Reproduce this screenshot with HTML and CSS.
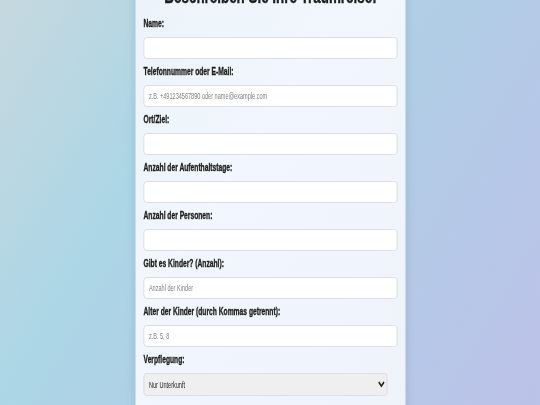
FILE: index.html
```html
<!DOCTYPE html>
<html lang="de">
<head>
<meta charset="utf-8">
<title>Traumreise</title>
<link rel="stylesheet" href="styles.css">
</head>
<body>
<main class="card">
  <h2 class="title">Beschreiben Sie Ihre Traumreise!</h2>
  <form class="form">
    <label class="label" for="name">Name:</label>
    <input class="field" id="name" type="text">
    <label class="label" for="kontakt">Telefonnummer oder E-Mail:</label>
    <input class="field" id="kontakt" type="text" placeholder="z.B. +491234567890 oder name@example.com">
    <label class="label" for="ort">Ort/Ziel:</label>
    <input class="field" id="ort" type="text">
    <label class="label" for="tage">Anzahl der Aufenthaltstage:</label>
    <input class="field" id="tage" type="text">
    <label class="label" for="personen">Anzahl der Personen:</label>
    <input class="field" id="personen" type="text">
    <label class="label" for="kinder">Gibt es Kinder? (Anzahl):</label>
    <input class="field" id="kinder" type="text" placeholder="Anzahl der Kinder">
    <label class="label" for="alter">Alter der Kinder (durch Kommas getrennt):</label>
    <input class="field" id="alter" type="text" placeholder="z.B. 5, 8">
    <label class="label" for="verpflegung">Verpflegung:</label>
    <select class="select" id="verpflegung">
      <option>Nur Unterkunft</option>
      <option>Frühstück</option>
      <option>Halbpension</option>
      <option>Vollpension</option>
    </select>
  </form>
</main>
</body>
</html>
```

FILE: styles.css
```css
html, body {
  margin: 0;
  padding: 0;
}
body {
  height: 405px;
  overflow: hidden;
  font-family: "Liberation Sans", Arial, sans-serif;
  background: linear-gradient(120deg, #c6d8df 0%, #acd6e6 30%, #b2cbe6 65%, #bcc2e8 100%);
  color: #222;
}
/* The reference is a horizontally compressed capture: the card is laid out
   at its natural width and squeezed to the width it shows. */
.card {
  box-sizing: border-box;
  width: 403px;
  margin: -36px auto 0;
  padding: 20px 12px 20px;
  background: linear-gradient(135deg, #ebf3f9 0%, #f1f7fc 40%, #eef3f9 100%);
  filter: drop-shadow(0 0 6px rgba(60, 90, 130, 0.2));
  min-height: 470px;
  transform: scaleX(0.67);
  transform-origin: 50% 0;
}
.title {
  margin: 0 0 10px;
  font-size: 20px;
  line-height: 24px;
  font-weight: bold;
  text-align: center;
  color: #1e1e1e;
  -webkit-text-stroke: 0.4px #1e1e1e;
}
.form {
  display: flex;
  flex-direction: column;
  align-items: flex-start;
}
.label {
  display: block;
  font-size: 10px;
  line-height: 12px;
  font-weight: bold;
  margin-bottom: 7px;
  color: #1e1e1e;
  -webkit-text-stroke: 0.35px #1e1e1e;
}
.field {
  box-sizing: border-box;
  width: 100%;
  height: 22px;
  margin: 0 0 7px;
  padding: 0 7px;
  border: 1px solid #d6dadf;
  border-radius: 4px;
  background: #fff;
  font-family: inherit;
  font-size: 8.3px;
}
.field::placeholder {
  color: #808080;
}
.select {
  box-sizing: border-box;
  width: 364px;
  height: 23px;
  padding: 0 3px;
  border: 1px solid #d6dadf;
  border-radius: 4px;
  background: #efefef;
  font-family: inherit;
  font-size: 8.3px;
  color: #222;
}
```
